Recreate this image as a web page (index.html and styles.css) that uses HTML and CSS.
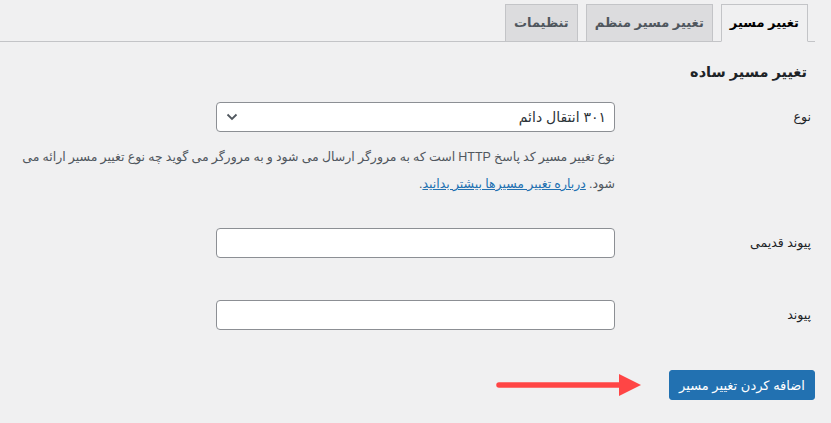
FILE: index.html
```html
<!DOCTYPE html>
<html lang="fa" dir="rtl">
<head>
<meta charset="utf-8">
<title>تغییر مسیر</title>
<link rel="stylesheet" href="styles.css">
</head>
<body>
<div class="wrap">
  <nav class="tabs">
    <a class="tab tab-active" href="#">تغییر مسیر</a>
    <a class="tab" href="#">تغییر مسیر منظم</a>
    <a class="tab" href="#">تنظیمات</a>
  </nav>

  <h2 class="title">تغییر مسیر ساده</h2>

  <div class="row row-type">
    <div class="label">نوع</div>
    <div class="field">
      <div class="select">
        <span class="select-text">۳۰۱ انتقال دائم</span>
        <svg class="chevron" width="12" height="8" viewBox="0 0 12 8"><path d="M1.5 1.5 L6 6 L10.5 1.5" fill="none" stroke="#50575e" stroke-width="1.8"/></svg>
      </div>
      <p class="description">نوع تغییر مسیر کد پاسخ HTTP است که به مرورگر ارسال می شود و به مرورگر می گوید چه نوع تغییر مسیر ارائه می شود. <a class="link" href="#">درباره تغییر مسیرها بیشتر بدانید</a>.</p>
    </div>
  </div>

  <div class="row row-old">
    <div class="label">پیوند قدیمی</div>
    <div class="field">
      <input class="input" type="text">
    </div>
  </div>

  <div class="row row-new">
    <div class="label">پیوند</div>
    <div class="field">
      <input class="input" type="text">
    </div>
  </div>

  <div class="submit">
    <button class="button" type="button">اضافه کردن تغییر مسیر</button>
    <svg class="arrow" width="146" height="24" viewBox="0 0 146 24">
      <line x1="3" y1="12" x2="126" y2="12" stroke="#ff4545" stroke-width="5.5" stroke-linecap="round"/>
      <polygon points="123,1 145,12 123,23" fill="#ff4545"/>
    </svg>
  </div>
</div>
</body>
</html>
```

FILE: styles.css
```css
html, body {
  margin: 0;
  padding: 0;
  background: #f0f0f1;
}

body {
  font-family: "Liberation Sans", "DejaVu Sans", sans-serif;
  font-size: 13px;
  color: #1d2327;
}

.wrap {
  padding-right: 16px;
}

.tabs {
  display: flex;
  gap: 8px;
  padding-top: 4px;
  padding-right: 7px;
  border-bottom: 1px solid #c3c4c7;
}

.tab {
  display: block;
  margin-bottom: -1px;
  padding: 6px 8px;
  line-height: 24px;
  font-size: 13px;
  font-weight: 700;
  color: #50575e;
  background: #dcdcde;
  border: 1px solid #c3c4c7;
  text-decoration: none;
  white-space: nowrap;
}

.tab-active {
  background: #f0f0f1;
  color: #000;
  border-bottom-color: #f0f0f1;
}

.title {
  margin: 18px 0 0;
  padding-right: 8px;
  font-size: 14.5px;
  line-height: 24px;
  font-weight: 700;
  color: #1d2327;
}

.row {
  display: grid;
  grid-template-columns: 200px 1fr;
  align-items: start;
}

.row-type { margin-top: 18px; }
.row-old { margin-top: 30px; }
.row-new { margin-top: 42px; }

.label {
  padding-right: 4px;
  line-height: 30px;
  font-size: 12.5px;
  color: #1d2327;
}

.field {
  padding-left: 16px;
}

.select {
  box-sizing: border-box;
  width: 399px;
  height: 30px;
  display: flex;
  align-items: center;
  justify-content: space-between;
  padding: 0 8px 0 9px;
  background: #fff;
  border: 1px solid #8c8f94;
  border-radius: 4px;
  font-size: 14px;
  color: #2c3338;
}

.chevron {
  display: block;
}

.description {
  margin: 12px 0 0;
  line-height: 27px;
  font-size: 12.5px;
  word-spacing: -0.3px;
  color: #50575e;
}

.link {
  color: #2271b1;
  text-decoration: underline;
}

.input {
  box-sizing: border-box;
  display: block;
  width: 399px;
  height: 30px;
  margin: 0;
  padding: 0 8px;
  background: #fff;
  border: 1px solid #8c8f94;
  border-radius: 4px;
  font: inherit;
}

.submit {
  margin-top: 40px;
  display: flex;
  align-items: center;
  gap: 27px;
}

.button {
  box-sizing: border-box;
  width: 146px;
  height: 30px;
  margin: 0;
  padding: 0 4px;
  background: #2271b1;
  border: 1px solid #2271b1;
  border-radius: 3px;
  color: #fff;
  font-family: inherit;
  font-size: 13px;
  font-weight: 400;
  white-space: nowrap;
  cursor: pointer;
}

.arrow {
  display: block;
}
```
